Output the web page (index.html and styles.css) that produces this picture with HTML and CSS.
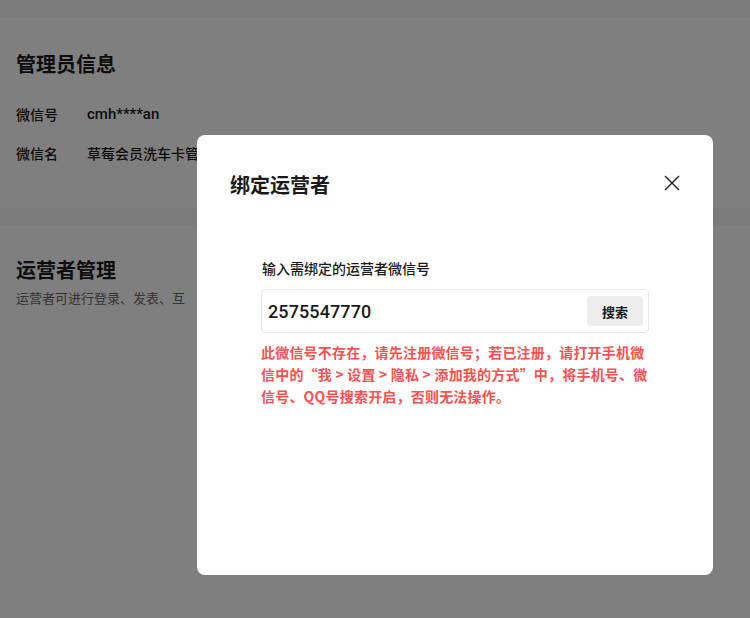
FILE: index.html
```html
<!DOCTYPE html>
<html lang="zh">
<head>
<meta charset="utf-8">
<title>绑定运营者</title>
<link rel="stylesheet" href="styles.css">
</head>
<body>
<div class="page">
  <section class="card card-admin">
    <h2 class="card-title">管理员信息</h2>
    <div class="info-row"><span class="info-label">微信号</span><span class="info-value">cmh****an</span></div>
    <div class="info-row"><span class="info-label">微信名</span><span class="info-value info-name">草莓会员洗车卡管</span></div>
  </section>
  <section class="card card-ops">
    <h2 class="card-title">运营者管理</h2>
    <p class="card-desc">运营者可进行登录、发表、互</p>
  </section>
</div>
<div class="mask"></div>
<div class="dialog">
  <div class="dialog-head">
    <h3 class="dialog-title">绑定运营者</h3>
    <button class="dialog-close" aria-label="关闭">
      <svg width="16" height="16" viewBox="0 0 16 16"><path d="M1 1L15 15M15 1L1 15" stroke="#1a1a1a" stroke-width="1.4" fill="none"/></svg>
    </button>
  </div>
  <div class="dialog-body">
    <div class="field-label">输入需绑定的运营者微信号</div>
    <div class="search-box">
      <span class="search-value">2575547770</span>
      <button class="search-btn">搜索</button>
    </div>
    <p class="error-tip">此微信号不存在，请先注册微信号；若已注册，请打开手机微信中的“我 &gt; 设置 &gt; 隐私 &gt; 添加我的方式”中，将手机号、微信号、QQ号搜索开启，否则无法操作。</p>
  </div>
</div>
</body>
</html>
```

FILE: styles.css
```css
* { box-sizing: border-box; }
html, body { margin: 0; padding: 0; }
body {
  width: 750px;
  height: 618px;
  overflow: hidden;
  background: #f6f6f6;
  font-family: "Roboto", "Noto Sans CJK SC", sans-serif;
  color: #1a1a1a;
}
.page { padding-top: 17px; display: flex; flex-direction: column; gap: 17px; }
.card { background: #fff; padding: 0 16px; }
.card-admin { height: 191px; padding-top: 35px; }
.card-ops { height: 400px; padding-top: 33px; }
.card-title { margin: 0; font-size: 20px; line-height: 26px; font-weight: 700; }
.info-row { display: flex; align-items: center; height: 39px; font-size: 14px; font-weight: 500; }
.card-admin .card-title { margin-bottom: 16px; }
.info-label { width: 71px; }
.info-value { font-size: 15px; }
.info-name { font-size: 14px; }
.card-desc { margin: 6px 0 0; font-size: 13px; color: #666; line-height: 18px; }

.mask { position: fixed; inset: 0; background: rgba(0,0,0,0.5); }
.dialog {
  position: fixed;
  left: 197px;
  top: 135px;
  width: 516px;
  height: 440px;
  background: #fff;
  border-radius: 8px;
  padding: 38px 33px 0 33px;
}
.dialog-head { display: flex; justify-content: space-between; align-items: center; height: 26px; }
.dialog-title { margin: 0; font-size: 20px; font-weight: 700; line-height: 26px; }
.dialog-close { border: 0; background: none; padding: 0; width: 16px; height: 16px; margin-top: -7px; display: flex; }
.dialog-body { padding: 0 31px 0 31px; margin-top: 60px; }
.field-label { font-size: 14px; font-weight: 500; line-height: 20px; padding-left: 1px; }
.search-box {
  margin-top: 10px;
  height: 44px;
  border: 1px solid #e7e7e7;
  border-radius: 4px;
  display: flex;
  align-items: center;
  justify-content: space-between;
  padding: 0 5px 0 6px;
}
.search-value { font-size: 18px; font-weight: 500; letter-spacing: 0.1px; }
.search-btn {
  border: 0;
  background: #ededed;
  border-radius: 4px;
  width: 56px;
  height: 30px;
  font-family: inherit;
  font-size: 13px;
  font-weight: 700;
  color: #1a1a1a;
  padding: 0;
}
.error-tip {
  margin: 8px 0 0;
  color: #fa5151;
  font-family: "Noto Sans CJK SC", sans-serif;
  font-size: 14px;
  font-weight: 700;
  line-height: 22px;
  letter-spacing: 0.2px;
}
```
